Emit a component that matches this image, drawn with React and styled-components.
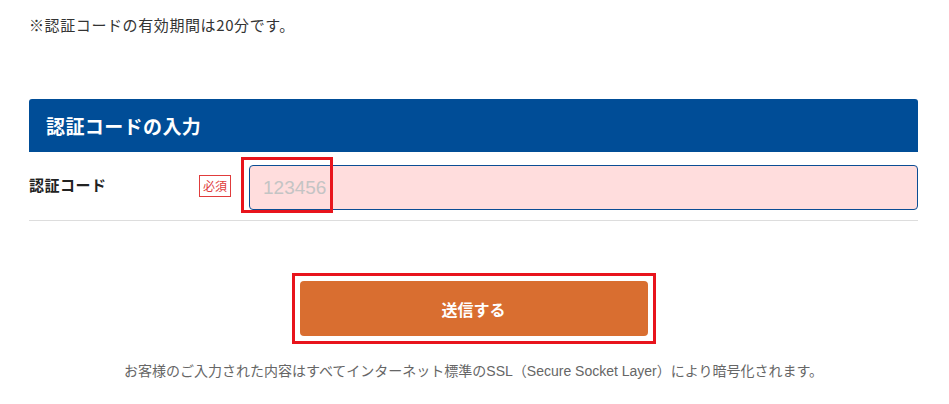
import styled, { createGlobalStyle } from "styled-components";

const GlobalStyle = createGlobalStyle`
  body {
    margin: 0;
    background: #fff;
    font-family: "Noto Sans CJK JP", "Liberation Sans", sans-serif;
    color: #333;
  }
`;

const Page = styled.div`
  padding: 13px 31px 0 29px;
`;

const Note = styled.p`
  margin: 0;
  font-size: 15px;
  letter-spacing: 0.6px;
  line-height: 24px;
`;

const SectionHead = styled.h2`
  margin: 62px 0 0;
  height: 53px;
  background: #004d97;
  border-radius: 3px 3px 0 0;
  color: #fff;
  font-size: 19px;
  letter-spacing: 0.4px;
  font-weight: 700;
  display: flex;
  align-items: center;
  padding-left: 17px;
`;

const FieldRow = styled.div`
  display: grid;
  grid-template-columns: 170px 50px 1fr;
  align-items: center;
  padding: 13px 0 10px;
  border-bottom: 1px solid #ddd;
`;

const Label = styled.div`
  font-size: 15px;
  letter-spacing: 0.5px;
  font-weight: 700;
  color: #222;
  margin-top: -6px;
`;

const Badge = styled.span`
  justify-self: start;
  border: 1px solid #e03c3c;
  color: #e03c3c;
  font-size: 12px;
  line-height: 20px;
  padding: 0 3px;
  margin-top: -4px;
`;

const InputWrap = styled.div`
  position: relative;
`;

const Input = styled.input`
  box-sizing: border-box;
  width: 100%;
  height: 45px;
  border: 1px solid #0b4d94;
  border-radius: 4px;
  background: #ffdddd;
  padding: 0 13px;
  font-size: 19px;
  font-family: "Liberation Sans", sans-serif;
  color: #333;
  outline: none;
  &::placeholder {
    color: #c4c4c4;
  }
`;

const Highlight = styled.div`
  position: absolute;
  pointer-events: none;
  border: 3px solid #e8141c;
  left: ${(p) => p.$left}px;
  top: ${(p) => p.$top}px;
  width: ${(p) => p.$w}px;
  height: ${(p) => p.$h}px;
  box-sizing: border-box;
`;

const Actions = styled.div`
  display: flex;
  justify-content: center;
  margin-top: 60px;
`;

const ButtonWrap = styled.div`
  position: relative;
`;

const SubmitButton = styled.button`
  width: 348px;
  height: 55px;
  border: none;
  border-radius: 4px;
  background: #d96e30;
  color: #fff;
  font-size: 16px;
  font-weight: 700;
  font-family: "Noto Sans CJK JP", sans-serif;
  cursor: pointer;
`;

const Footer = styled.p`
  margin: 24px 0 0;
  text-align: center;
  font-size: 14px;
  color: #666;
  font-family: "Liberation Sans", "Noto Sans CJK JP", sans-serif;
`;

export default function App() {
  return (
    <>
      <GlobalStyle />
      <Page>
        <Note>※認証コードの有効期間は20分です。</Note>
        <SectionHead>認証コードの入力</SectionHead>
        <FieldRow>
          <Label>認証コード</Label>
          <Badge>必須</Badge>
          <InputWrap>
            <Input placeholder="123456" />
            <Highlight $left={-8} $top={-8} $w={92} $h={56} />
          </InputWrap>
        </FieldRow>
        <Actions>
          <ButtonWrap>
            <SubmitButton>送信する</SubmitButton>
            <Highlight $left={-8} $top={-8} $w={364} $h={71} />
          </ButtonWrap>
        </Actions>
        <Footer>
          お客様のご入力された内容はすべてインターネット標準のSSL（Secure Socket Layer）により暗号化されます。
        </Footer>
      </Page>
    </>
  );
}
